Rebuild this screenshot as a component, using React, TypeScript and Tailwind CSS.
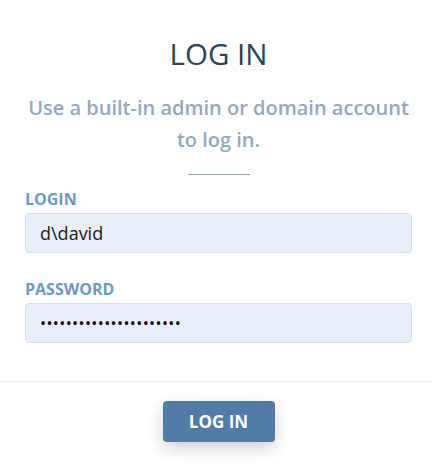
export default function App() {
  return (
    <div className="w-[432px] h-[464px] bg-white flex flex-col font-['Open_Sans',sans-serif]">
      <div className="flex flex-col pl-[25px] pr-[20px] pt-[34px]">
        <h1 className="text-center text-[29.5px] leading-[40px] text-[#2c4460] font-normal">LOG IN</h1>
        <p className="mt-[18px] text-center text-[20px] leading-[32px] font-semibold text-[#94a8c0]">
          Use a built-in admin or domain account
          <br />
          to log in.
        </p>
        <div className="mx-auto mt-[18px] w-[62px] h-px bg-[#8fa6c4]" />

        <label className="mt-[14px] text-[16px] leading-[20px] font-bold text-[#6a9ac4]">LOGIN</label>
        <div className="mt-[4px] h-[40px] rounded-[4px] border border-[#d4dff0] bg-[#e8eefa] flex items-center px-[14px] text-[18px] text-[#1a1a1a]">
          d\david
        </div>

        <label className="mt-[26px] text-[16px] leading-[20px] font-bold text-[#6a9ac4]">PASSWORD</label>
        <div className="mt-[4px] h-[40px] rounded-[4px] border border-[#d4dff0] bg-[#e8eefa] flex items-center px-[14px] text-[#111]">
          <span className="text-[16px] tracking-[0.4px]">••••••••••••••••••••••</span>
        </div>
      </div>

      <div className="mt-[38px] h-px bg-[#eeeeee]" />

      <div className="flex justify-center pl-[25px] pr-[20px] pt-[19px]">
        <button className="w-[112px] h-[41px] rounded-[4px] bg-[#527ca8] text-white text-[17px] font-bold shadow-[0_6px_16px_rgba(0,0,0,0.18)]">
          LOG IN
        </button>
      </div>
    </div>
  );
}
